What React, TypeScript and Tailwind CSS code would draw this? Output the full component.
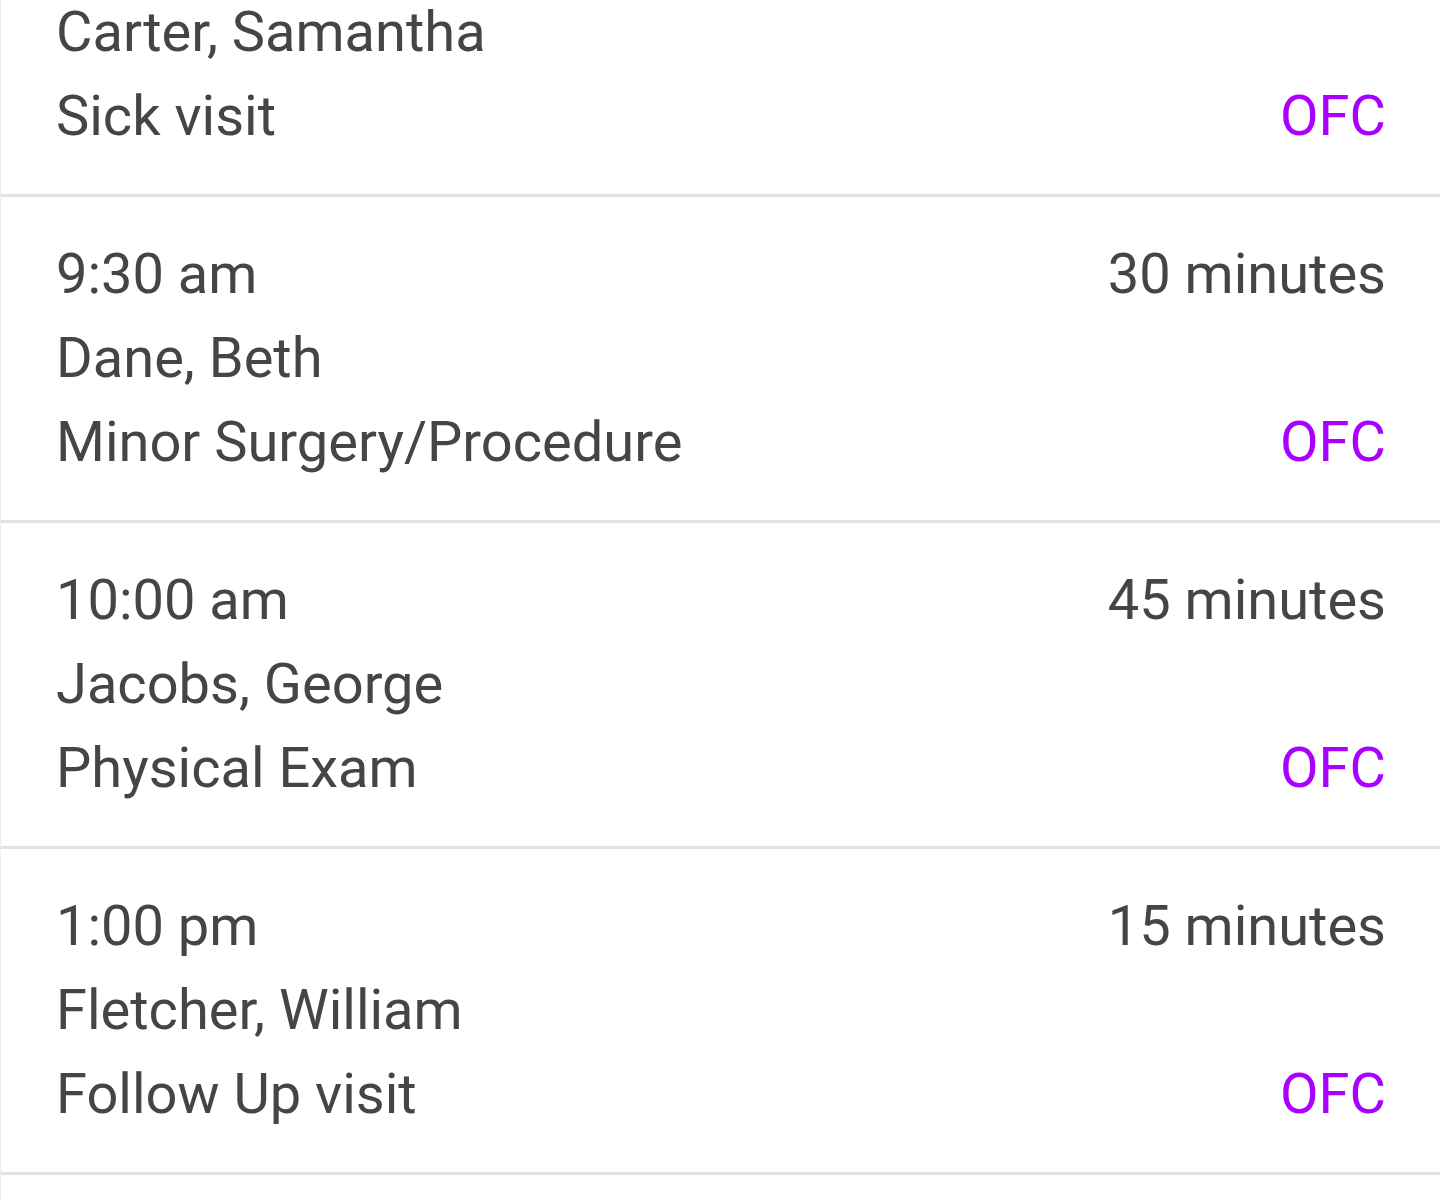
import React from "react";

type Appt = { time: string; duration: string; name: string; type: string; loc: string };

const appts: Appt[] = [
  { time: "9:30 am", duration: "30 minutes", name: "Dane, Beth", type: "Minor Surgery/Procedure", loc: "OFC" },
  { time: "10:00 am", duration: "45 minutes", name: "Jacobs, George", type: "Physical Exam", loc: "OFC" },
  { time: "1:00 pm", duration: "15 minutes", name: "Fletcher, William", type: "Follow Up visit", loc: "OFC" },
];

export default function App() {
  return (
    <div
      className="w-[1440px] h-[1200px] overflow-hidden bg-white border-l border-[#ededed]"
      style={{ fontFamily: "Roboto, 'Noto Sans', sans-serif" }}
    >
      <div className="text-[56px] leading-[84px] text-[#454545]">
        {/* partially scrolled first row */}
        <div className="border-b-[3px] border-[#e2e2e2] pl-[55px] pr-[54px] pb-[36px]">
          <div className="leading-[64px] mb-[10px]">Carter, Samantha</div>
          <div className="flex justify-between">
            <span>Sick visit</span>
            <span className="text-[#aa00ff]">OFC</span>
          </div>
        </div>
        {appts.map((a, i) => (
          <div
            key={i}
            className="border-b-[3px] border-[#e2e2e2] pl-[55px] pr-[54px] pt-[35px] pb-[36px]"
          >
            <div className="flex justify-between">
              <span>{a.time}</span>
              <span>{a.duration}</span>
            </div>
            <div>{a.name}</div>
            <div className="flex justify-between">
              <span>{a.type}</span>
              <span className="text-[#aa00ff]">{a.loc}</span>
            </div>
          </div>
        ))}
      </div>
    </div>
  );
}
